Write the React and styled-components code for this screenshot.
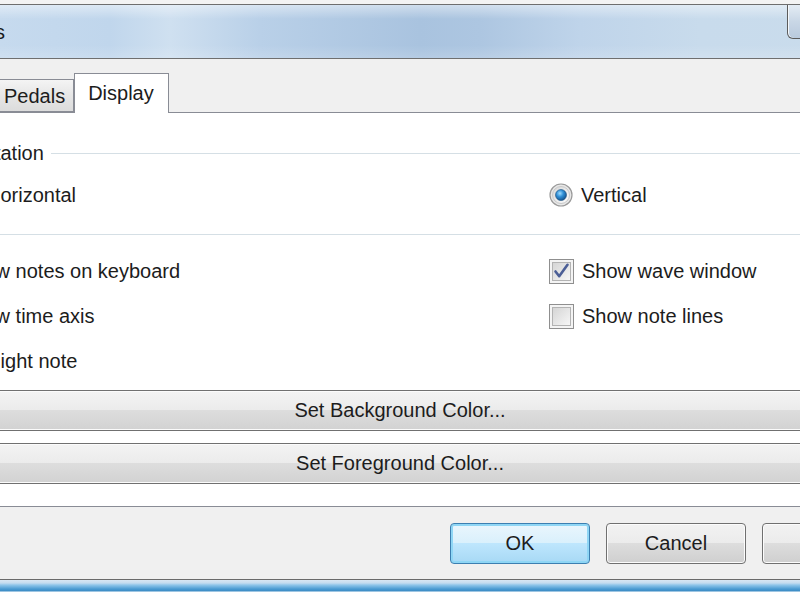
import React from 'react';
import styled, { createGlobalStyle } from 'styled-components';

const GlobalStyle = createGlobalStyle`
  html, body {
    margin: 0;
    padding: 0;
    background: #f3f3f3;
    overflow: hidden;
  }
  body {
    font-family: "Liberation Sans", Arial, sans-serif;
    color: #1c1c1c;
  }
`;

const Screen = styled.div`
  width: 800px;
  height: 600px;
  overflow: hidden;
  padding-top: 4px;
  box-sizing: border-box;
  background: #f3f3f3;
`;

// the dialog is wider than the photo: it is cropped on both sides
const Dialog = styled.div`
  width: 1040px;
  margin-left: -120px;
  border-top: 1px solid #6e6e6e;
  display: flex;
  flex-direction: column;
  background: #f0f0f0;
`;

const TitleBar = styled.div`
  height: 53px;
  display: flex;
  align-items: center;
  padding-left: 56px;
  border-bottom: 1px solid #6f6f6f;
  background:
    linear-gradient(180deg, rgba(255, 255, 255, 0.45) 0px, rgba(255, 255, 255, 0) 14px, rgba(255, 255, 255, 0) 40px, rgba(255, 255, 255, 0.15) 53px),
    linear-gradient(90deg, #c6daee 120px, #c0d6ec 230px, #cfe0f0 290px, #b9d0e8 380px, #a9c3df 540px, #adc6e1 600px, #bfd4ea 700px, #c8dbec 820px, #cadcec 1040px);
`;

const Title = styled.span`
  font-size: 20px;
  color: #1a1a1a;
  margin-top: 2px;
`;

const CloseButton = styled.div`
  align-self: flex-start;
  margin-left: auto;
  margin-right: 33px;
  width: 100px;
  height: 34px;
  box-sizing: border-box;
  border: 1px solid #5c5c5c;
  border-top: none;
  border-radius: 0 0 6px 6px;
  background: linear-gradient(180deg, #e4ecf4, #c9d7e6 50%, #b9cadd);
  box-shadow: inset 1px 0 0 #f4f8fb;
`;

const TabStrip = styled.div`
  height: 53px;
  display: flex;
  align-items: flex-end;
  padding-left: 114px;
`;

const Tab = styled.div`
  box-sizing: border-box;
  height: ${p => (p.$active ? 40 : 33)}px;
  margin-bottom: ${p => (p.$active ? -1 : 0)}px;
  padding: ${p => p.$pad};
  display: flex;
  align-items: center;
  border: 1px solid #898c95;
  border-bottom: ${p => (p.$active ? 'none' : '1px solid #898c95')};
  background: ${p => (p.$active ? '#ffffff' : 'linear-gradient(180deg, #f4f4f4, #e6e6e6 50%, #dcdcdc)')};
  font-size: 20px;
  color: #1c1c1c;
  position: relative;
  z-index: ${p => (p.$active ? 2 : 1)};
`;

const Page = styled.div`
  background: #ffffff;
  border-top: 1px solid #898c95;
  border-bottom: 1px solid #898c95;
  padding: 27px 0 22px;
  display: flex;
  flex-direction: column;
`;

const GroupBox = styled.div`
  margin: 0 45px;
  padding-bottom: 25px;
  border-bottom: 1px solid #d5dfe5;
`;

const GroupHeader = styled.div`
  height: 27px;
  display: flex;
  align-items: center;
  gap: 7px;
  padding-left: 21px;
  font-size: 20px;
`;

const GroupLine = styled.div`
  flex: 1;
  height: 1px;
  background: #d5dfe5;
`;

const OptionGrid = styled.div`
  display: grid;
  grid-template-columns: ${p => p.$first}px 1fr;
  grid-auto-rows: 28px;
  row-gap: 17px;
  padding-left: ${p => p.$left}px;
  margin-top: ${p => p.$top}px;
`;

const Option = styled.label`
  display: flex;
  align-items: center;
  gap: 8px;
  font-size: 20px;
  white-space: nowrap;
  margin-left: ${p => p.$shift || 0}px;
`;

const ButtonStack = styled.div`
  display: flex;
  flex-direction: column;
  gap: 12px;
  margin-top: 15px;
  padding: 0 20px;
`;

const WideButton = styled.div`
  height: 41px;
  box-sizing: border-box;
  border: 1px solid #707070;
  border-radius: 3px;
  display: flex;
  align-items: center;
  justify-content: center;
  font-size: 20px;
  background: linear-gradient(180deg, #f3f3f3, #ebebeb 50%, #dddddd 50%, #d2d2d2);
  box-shadow: inset 0 0 0 1px #fbfbfb;
`;

const Footer = styled.div`
  display: flex;
  justify-content: flex-end;
  gap: 16px;
  padding: 16px 18px 15px 0;
`;

const DialogButton = styled.div`
  width: 140px;
  height: 41px;
  box-sizing: border-box;
  border: 1px solid ${p => (p.$default ? '#3c7fb1' : '#707070')};
  border-radius: 4px;
  display: flex;
  align-items: center;
  justify-content: center;
  font-size: 20px;
  background: ${p =>
    p.$default
      ? 'linear-gradient(180deg, #eaf6fd, #d9f0fc 50%, #bee6fd 50%, #a7d9f5)'
      : 'linear-gradient(180deg, #f2f2f2, #ebebeb 50%, #dddddd 50%, #cfcfcf)'};
  box-shadow: ${p => (p.$default ? 'inset 0 0 0 2px #8fd6f5' : 'inset 0 0 0 1px #fcfcfc')};
`;

const FrameEdge = styled.div`
  border-top: 1px solid #6a6a6a;
  height: 20px;
  background: linear-gradient(180deg, #d8e7f3 0px, #c4dcef 3px, #8fc6ea 5px, #4a9bd2 9px, #3c8bc4 11px, #ffffff 12px);
`;

const RadioDot = ({ checked }) => (
  <svg width="24" height="24" viewBox="0 0 24 24">
    <defs>
      <linearGradient id="rbg" x1="0" y1="0" x2="1" y2="1">
        <stop offset="0" stopColor="#d6d6d6" />
        <stop offset="1" stopColor="#ffffff" />
      </linearGradient>
      <radialGradient id="rdot" cx="0.4" cy="0.35" r="0.7">
        <stop offset="0" stopColor="#9fdcff" />
        <stop offset="0.45" stopColor="#2f8fd6" />
        <stop offset="1" stopColor="#124d86" />
      </radialGradient>
    </defs>
    <circle cx="12" cy="12" r="11" fill="#e8e8e8" stroke="#9a9a9a" strokeWidth="1.2" />
    <circle cx="12" cy="12" r="8.5" fill="url(#rbg)" stroke="#c8c8c8" strokeWidth="1" />
    {checked && <circle cx="12" cy="12" r="5.5" fill="url(#rdot)" stroke="#1b4f7e" strokeWidth="0.6" />}
  </svg>
);

const CheckBox = ({ checked }) => (
  <svg width="25" height="25" viewBox="0 0 25 25">
    <defs>
      <linearGradient id="cbg" x1="0" y1="0" x2="1" y2="1">
        <stop offset="0" stopColor="#d4d4d4" />
        <stop offset="1" stopColor="#f7f7f7" />
      </linearGradient>
    </defs>
    <rect x="0.5" y="0.5" width="24" height="24" fill="#f4f4f4" stroke="#8f8f8f" />
    <rect x="3.5" y="3.5" width="18" height="18" fill="url(#cbg)" stroke="#b3b3b3" />
    {checked && (
      <path d="M6.5 12.5 L10.2 17.2 L18.5 5.8" fill="none" stroke="#4b5e96" strokeWidth="2.6" strokeLinecap="round" strokeLinejoin="round" />
    )}
  </svg>
);

const App = () => (
  <>
    <GlobalStyle />
    <Screen>
      <Dialog>
        <TitleBar>
          <Title>Options</Title>
          <CloseButton />
        </TitleBar>
        <TabStrip>
          <Tab $pad="2px 8px 0 9px">Pedals</Tab>
          <Tab $active $pad="0 14px 0 13px">Display</Tab>
        </TabStrip>
        <Page>
          <GroupBox>
            <GroupHeader>
              <span>Orientation</span>
              <GroupLine />
            </GroupHeader>
            <OptionGrid $first={595} $left={29} $top={14}>
              <Option><RadioDot />Horizontal</Option>
              <Option><RadioDot checked />Vertical</Option>
            </OptionGrid>
          </GroupBox>
          <OptionGrid $first={622} $left={47} $top={22}>
            <Option><CheckBox checked />Show notes on keyboard</Option>
            <Option><CheckBox checked />Show wave window</Option>
            <Option><CheckBox checked />Show time axis</Option>
            <Option><CheckBox />Show note lines</Option>
            <Option $shift={-5}><CheckBox />Highlight note</Option>
          </OptionGrid>
          <ButtonStack>
            <WideButton>Set Background Color...</WideButton>
            <WideButton>Set Foreground Color...</WideButton>
          </ButtonStack>
        </Page>
        <Footer>
          <DialogButton $default>OK</DialogButton>
          <DialogButton>Cancel</DialogButton>
          <DialogButton>Apply</DialogButton>
        </Footer>
        <FrameEdge />
      </Dialog>
    </Screen>
  </>
);

export default App;
